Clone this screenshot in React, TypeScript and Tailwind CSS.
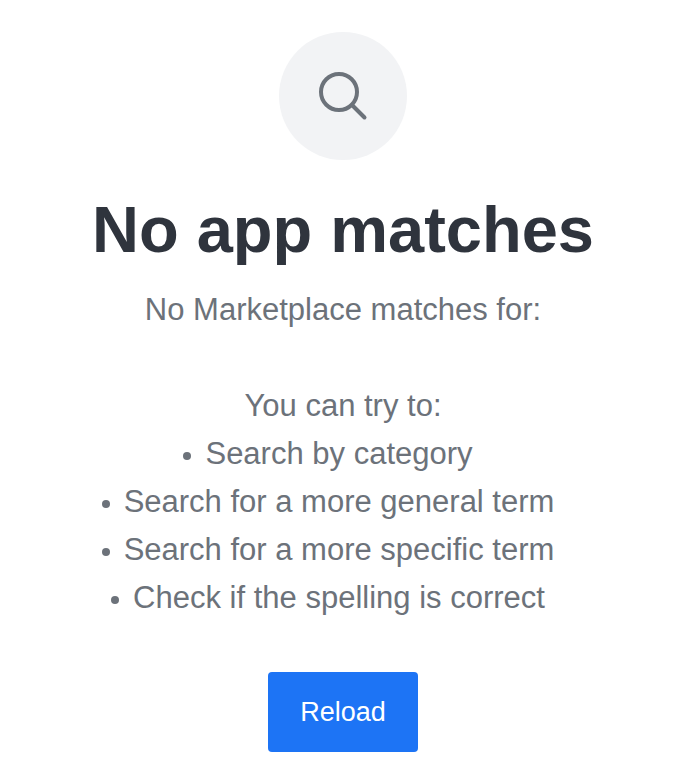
const suggestions = [
  "Search by category",
  "Search for a more general term",
  "Search for a more specific term",
  "Check if the spelling is correct",
];

export default function App() {
  return (
    <main className="flex flex-col items-center bg-white px-8 py-8 text-center font-['Liberation_Sans',Arial,sans-serif] text-[31px] leading-12 text-[#6c727a]">
      <div className="flex size-32 items-center justify-center rounded-full bg-[#f2f3f5]">
        <svg aria-hidden="true" className="size-16" viewBox="0 0 64 64" fill="none" stroke="#6c727a" strokeWidth="4" strokeLinecap="round">
          <circle cx="28" cy="28" r="18" />
          <path d="M41 41L53.5 53.5" />
        </svg>
      </div>
      <h1 className="mt-8 text-[65px] leading-[76px] font-bold text-[#2f343d]">No app matches</h1>
      <p className="mt-[18px]">No Marketplace matches for:</p>
      <section className="mt-12 w-full">
        <p>You can try to:</p>
        <ul className="pr-[30px]">
          {suggestions.map((item) => (
            <li key={item} className="before:mr-[14px] before:inline-block before:size-2 before:rounded-full before:bg-[#6c727a] before:align-middle before:content-['']">
              {item}
            </li>
          ))}
        </ul>
      </section>
      <button type="button" className="mt-[50px] h-20 rounded bg-[#1d74f5] px-8 text-[27px] leading-10 text-white">
        Reload
      </button>
    </main>
  );
}
